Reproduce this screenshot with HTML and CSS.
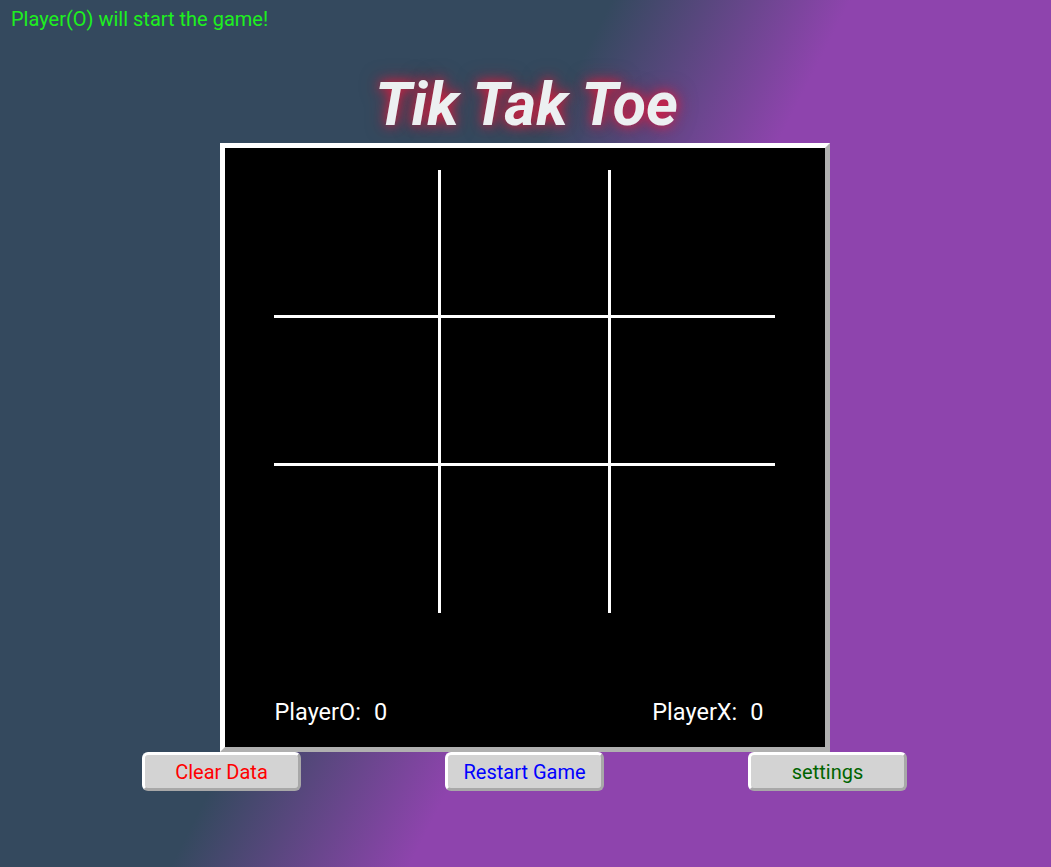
FILE: index.html
```html
<!DOCTYPE html>
<html lang="en">
<head>
<meta charset="utf-8">
<title>Tik Tak Toe</title>
<link rel="stylesheet" href="styles.css">
</head>
<body>
<p class="status">Player(O) will start the game!</p>
<h1 class="title">Tik Tak Toe</h1>
<main class="board">
  <div class="grid">
    <div class="cell"></div><div class="cell"></div><div class="cell"></div>
    <div class="cell"></div><div class="cell"></div><div class="cell"></div>
    <div class="cell"></div><div class="cell"></div><div class="cell"></div>
  </div>
  <div class="scores">
    <span class="score">PlayerO:<span class="num">0</span></span>
    <span class="score">PlayerX:<span class="num">0</span></span>
  </div>
</main>
<div class="actions">
  <button class="btn btn-clear">Clear Data</button>
  <button class="btn btn-restart">Restart Game</button>
  <button class="btn btn-settings">settings</button>
</div>
</body>
</html>
```

FILE: styles.css
```css
html, body {
  margin: 0;
  padding: 0;
}
body {
  min-height: 100vh;
  box-sizing: border-box;
  padding-right: 2px;
  font-family: Roboto, "Liberation Sans", sans-serif;
  background: linear-gradient(117deg, #34495e 41%, #8e44ad 57%);
  display: flex;
  flex-direction: column;
  align-items: center;
}
.status {
  align-self: flex-start;
  margin: 0;
  padding: 8px 11px 0;
  font-size: 20px;
  line-height: 23px;
  color: #1ef01e;
}
.title {
  margin: 38px 0 4px 4px;
  font-size: 61px;
  line-height: 70px;
  font-weight: 700;
  font-style: italic;
  color: #ecf0f1;
  text-shadow: 0 0 12px rgba(235, 25, 60, 0.95), 0 0 20px rgba(200, 20, 50, 0.5);
}
.board {
  box-sizing: content-box;
  width: 600px;
  height: 599px;
  background: #000;
  border: 5px solid;
  border-color: #fff #b0b0b0 #b0b0b0 #fff;
  padding: 0;
  display: flex;
  flex-direction: column;
  align-items: center;
}
.grid {
  margin-top: 22px;
  display: grid;
  grid-template-columns: 164px 167px 164px;
  grid-template-rows: 145px 145px 147px;
  gap: 3px;
  background: #fff;
}
.cell {
  background: #000;
}
.scores {
  align-self: stretch;
  display: flex;
  justify-content: space-between;
  margin-top: 86px;
  padding: 0 61px 0 50px;
  font-size: 23.5px;
  line-height: 27px;
  color: #fff;
}
.num {
  margin-left: 13px;
}
.actions {
  width: 765px;
  display: flex;
  justify-content: space-between;
}
.btn {
  box-sizing: border-box;
  width: 159px;
  height: 39px;
  background: #d3d3d3;
  border: 3px solid;
  border-color: #fff #a8a8a8 #a8a8a8 #fff;
  border-radius: 6px;
  font-family: Roboto, "Liberation Sans", sans-serif;
  font-size: 20px;
  padding: 0;
}
.btn-clear { color: #ff0000; }
.btn-restart { color: #0000ff; }
.btn-settings { color: #006400; }
```
